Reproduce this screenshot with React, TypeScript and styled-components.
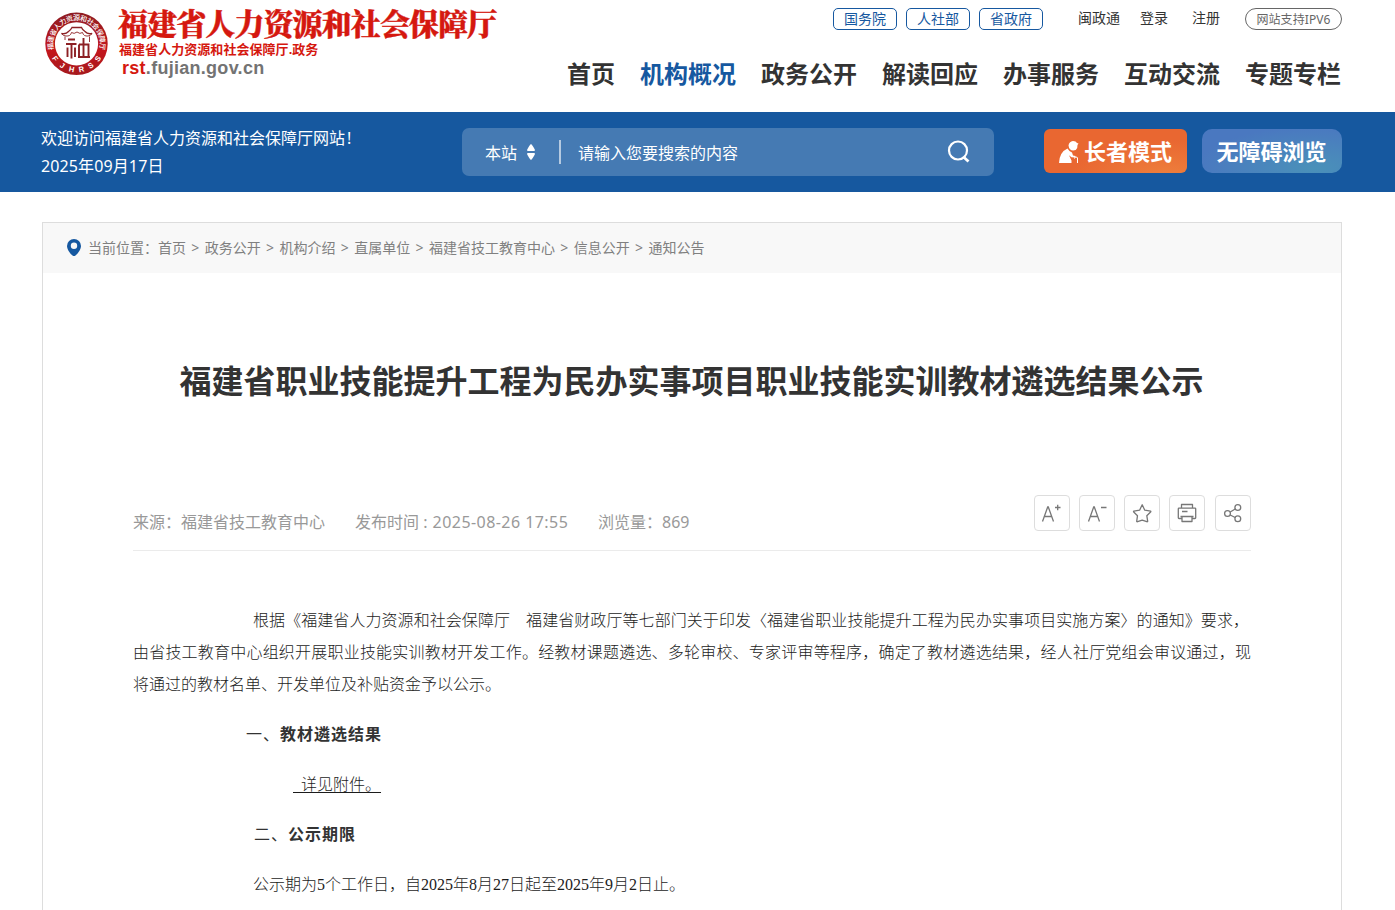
import React from "react";
import styled, { createGlobalStyle } from "styled-components";

const GlobalStyle = createGlobalStyle`
  * { box-sizing: border-box; }
  html, body { margin: 0; padding: 0; }
  body {
    height: 910px;
    overflow: hidden;
    background: #fff;
    color: #333;
    font-family: "Noto Sans", "Noto Sans CJK SC", sans-serif;
    text-spacing-trim: space-all;
  }
  a { color: inherit; text-decoration: none; }
`;

const Header = styled.header`
  display: flex;
  justify-content: space-between;
  height: 112px;
  padding: 8px 53px 0 42px;
`;

const Brand = styled.div`
  display: flex;
  gap: 9px;
  padding-left: 2px;
`;

const Seal = styled.svg`
  width: 65px;
  height: 65px;
  margin-top: 3px;
`;

const BrandText = styled.div`
  display: flex;
  flex-direction: column;
  white-space: nowrap;
  color: #d5180f;
  font-family: "Liberation Sans", "Noto Sans CJK SC", sans-serif;
  font-weight: 700;
`;

const BrandTitle = styled.div`
  height: 33px;
  font-family: "Noto Serif CJK SC", "Noto Sans CJK SC", sans-serif;
  font-size: 30px;
  font-weight: 900;
  line-height: 29px;
  letter-spacing: -0.9px;
  -webkit-text-stroke: 0.4px #d5180f;
`;

const BrandSub = styled.div`
  padding-left: 1px;
  font-size: 13px;
  line-height: 17px;
  letter-spacing: 0.05px;
`;

const BrandUrl = styled.div`
  padding-left: 4px;
  font-size: 18px;
  line-height: 20px;
  letter-spacing: 0.28px;
  color: #737373;
  span { color: #d5180f; }
`;

const HeaderSide = styled.div`
  display: flex;
  flex-direction: column;
  align-items: flex-end;
`;

const TopLinks = styled.div`
  display: flex;
  align-items: center;
  height: 22px;
  font-size: 14px;
  line-height: 20px;
`;

const BoxLink = styled.a`
  width: 64px;
  height: 22px;
  margin-right: 9px;
  border: 1px solid #1658a0;
  border-radius: 5px;
  color: #1658a0;
  text-align: center;
`;

const UserLinks = styled.div`
  display: flex;
  margin: 0 25px 2px 26px;
`;

const PlainLink = styled.a<{ $gap?: number }>`
  margin-right: ${(p) => p.$gap ?? 0}px;
`;

const Ipv6 = styled.a`
  width: 97px;
  height: 22px;
  border: 1px solid #666;
  border-radius: 11px;
  color: #666;
  font-size: 12px;
  line-height: 21px;
  letter-spacing: 0.1px;
  text-align: center;
`;

const Nav = styled.nav`
  display: flex;
  gap: 25px;
  margin: 26px 1px 0 0;
  font-size: 24px;
  font-weight: 700;
  line-height: 36px;
  white-space: nowrap;
`;

const NavItem = styled.a<{ $active?: boolean }>`
  color: ${(p) => (p.$active ? "#1658a0" : "#333")};
`;

const Banner = styled.section`
  display: flex;
  align-items: flex-start;
  height: 80px;
  padding: 0 53px 0 41px;
  background: #16589f;
  color: #fff;
`;

const Welcome = styled.div`
  width: 421px;
  padding-top: 12px;
  font-size: 16px;
  line-height: 28px;
  white-space: nowrap;
`;

const WelcomeMark = styled.span`
  margin-left: 2px;
`;

const DateText = styled.div`
  letter-spacing: 0.12px;
`;

const SearchBox = styled.div`
  display: flex;
  align-items: center;
  width: 532px;
  height: 48px;
  margin-top: 16px;
  padding: 0 23px;
  border-radius: 7px;
  background: #457ab3;
  font-size: 16px;
`;

const SortArrows = styled.svg`
  width: 10px;
  height: 18px;
  margin-left: 9px;
`;

const Separator = styled.i`
  width: 2px;
  height: 24px;
  margin: 0 17px 0 23px;
  background: #b5cae1;
`;

const Placeholder = styled.span`
  flex: 1;
`;

const SearchIcon = styled.svg`
  width: 24px;
  height: 24px;
`;

const ModeButton = styled.button<{ $kind: "elder" | "access" }>`
  display: flex;
  align-items: center;
  justify-content: center;
  width: ${(p) => (p.$kind === "elder" ? 143 : 140)}px;
  height: 44px;
  margin: 17px 0 0 ${(p) => (p.$kind === "elder" ? 50 : 15)}px;
  padding: 0 1px 2px 0;
  border: 0;
  border-radius: ${(p) => (p.$kind === "elder" ? 6 : 10)}px;
  background: ${(p) =>
    p.$kind === "elder"
      ? "radial-gradient(ellipse at 85% 110%, #ee803d 0%, #e96731 55%)"
      : "radial-gradient(ellipse at 80% 90%, #4a91b9 0%, #4a78c0 75%)"};
  color: #fff;
  font: 700 22px "Noto Sans", "Noto Sans CJK SC", sans-serif;
  white-space: nowrap;
`;

const ElderIcon = styled.svg`
  width: 20px;
  height: 22px;
  margin: 4px 5px 0 1px;
`;

const Panel = styled.main`
  width: 1300px;
  height: 700px;
  margin: 30px 0 0 42px;
  border: 1px solid #ddd;
`;

const Crumbs = styled.div`
  display: flex;
  align-items: center;
  height: 50px;
  padding: 0 0 2px 24px;
  background: #f8f8f8;
  color: #808080;
  font-size: 14px;
  white-space: nowrap;
`;

const Pin = styled.svg`
  width: 14px;
  height: 17px;
  margin: 1px 7px 0 0;
`;

const CrumbSep = styled.span`
  width: 18.75px;
  text-align: center;
  font-size: 14px;
`;

const Article = styled.article`
  width: 1118px;
  margin-left: 90px;
`;

const Title = styled.h1`
  margin: 84px 0 0 -1px;
  font-size: 32px;
  font-weight: 700;
  line-height: 48px;
  text-align: center;
  white-space: nowrap;
`;

const Meta = styled.div`
  display: flex;
  height: 56px;
  margin-top: 90px;
  border-bottom: 1px solid #ebebeb;
  color: #999;
  font-size: 16px;
  white-space: nowrap;
`;

const MetaItem = styled.span<{ $width?: number }>`
  width: ${(p) => (p.$width ? `${p.$width}px` : "auto")};
  padding-top: 15px;
  line-height: 24px;
`;

const Stamp = styled.span`
  margin-left: 1px;
  letter-spacing: 0.44px;
`;

const Tools = styled.div`
  display: flex;
  gap: 9px;
  margin-left: auto;
`;

const Tool = styled.button`
  width: 36px;
  height: 36px;
  padding: 0;
  border: 1px solid #ddd;
  border-radius: 4px;
  background: #fff;
  &:last-child { margin-left: 1px; }
  svg {
    display: block;
    width: 34px;
    height: 34px;
    fill: none;
    stroke: #777;
    stroke-width: 1.3;
  }
`;

const Body = styled.div`
  padding-top: 54px;
  color: #1c1c1c;
  font-family: "Liberation Serif", "Noto Sans CJK SC", serif;
  font-size: 16px;
  font-weight: 300;
  line-height: 32px;
`;

const Paragraph = styled.p<{ $indent?: number }>`
  margin: 0 0 18px;
  padding-left: ${(p) => p.$indent ?? 0}px;
  white-space: nowrap;
`;

const Line = styled.span<{ $indent?: number; $end?: number; $last?: boolean }>`
  display: block;
  margin: 0 ${(p) => p.$end ?? 0}px 0 ${(p) => p.$indent ?? 0}px;
  text-align-last: ${(p) => (p.$last ? "left" : "justify")};
`;

const Heading = styled.h2<{ $indent: number }>`
  margin: 0 0 18px;
  padding-left: ${(p) => p.$indent}px;
  color: #333;
  font-size: 16px;
  font-weight: 700;
  line-height: 32px;
  letter-spacing: 1px;
  span { font-weight: 400; }
`;

const Underlined = styled.u`
  white-space: pre;
  text-decoration-skip-ink: none;
  text-underline-offset: 2px;
  text-decoration-thickness: 1px;
`;

const navItems = ["首页", "机构概况", "政务公开", "解读回应", "办事服务", "互动交流", "专题专栏"];
const crumbs = ["首页", "政务公开", "机构介绍", "直属单位", "福建省技工教育中心", "信息公开", "通知公告"];

const sealTop = "福建省人力资源和社会保障厅".split("");
const sealBottom = "FJHRSS".split("");

function SealLogo() {
  return (
    <Seal viewBox="0 0 65 65">
      <defs>
        <linearGradient id="sealRed" x1="0" y1="0" x2="0" y2="1">
          <stop offset="0" stopColor="#8d1c22" />
          <stop offset="0.6" stopColor="#c4161c" />
          <stop offset="1" stopColor="#a5191d" />
        </linearGradient>
      </defs>
      <circle cx="32.5" cy="32.8" r="31.2" fill="url(#sealRed)" />
      <circle cx="32.5" cy="32.8" r="21.6" fill="#fff" />
      <g fill="#fff" fontFamily="Noto Sans CJK SC" fontSize="7" fontWeight="500" textAnchor="middle">
        {sealTop.map((c, i) => (
          <text key={i} x="32.5" y="9.4" transform={`rotate(${-96 + i * 16} 32.5 32.8)`}>{c}</text>
        ))}
      </g>
      <g fill="#fff" fontFamily="Liberation Sans" fontSize="7.5" fontWeight="700" textAnchor="middle">
        {sealBottom.map((c, i) => (
          <text key={i} x="32.5" y="61.3" transform={`rotate(${55 - i * 22} 32.5 32.8)`}>{c}</text>
        ))}
      </g>
      <g fill="none" stroke="#8d2024">
        <path d="M17.500 22.500Q22 23.500 24.500 20.500 27 18.500 28 16.500H37.500Q38.500 19 41 20.500 43.500 23.500 48 22.500" strokeWidth="1.300" />
        <path d="M17.500 22.500Q19 25 22 25M48 22.500Q46.500 25 44 25M22 25Q26.500 25.500 27.500 21.500 30 23.500 33 21 36 23.500 38.500 21.500 39.500 25.500 44 25M21 25.500V29M45.500 25.500V31" strokeWidth=".9" />
        <path d="M24 28.500H31M22 33H32.500M27.500 33V47.500M23.500 36.500V46M31 36.500V46M39.500 27V46M35 33.500H44.500V46M35 33.500V46M34 46H46" strokeWidth="1.900" />
      </g>
    </Seal>
  );
}

export default function App() {
  return (
    <>
      <GlobalStyle />
      <Header>
        <Brand>
          <SealLogo />
          <BrandText>
            <BrandTitle>福建省人力资源和社会保障厅</BrandTitle>
            <BrandSub>福建省人力资源和社会保障厅.政务</BrandSub>
            <BrandUrl><span>rst</span>.fujian.gov.cn</BrandUrl>
          </BrandText>
        </Brand>
        <HeaderSide>
          <TopLinks>
            <BoxLink>国务院</BoxLink>
            <BoxLink>人社部</BoxLink>
            <BoxLink>省政府</BoxLink>
            <UserLinks>
              <PlainLink $gap={20}>闽政通</PlainLink>
              <PlainLink $gap={24}>登录</PlainLink>
              <PlainLink>注册</PlainLink>
            </UserLinks>
            <Ipv6>网站支持IPV6</Ipv6>
          </TopLinks>
          <Nav>
            {navItems.map((n) => (
              <NavItem key={n} $active={n === "机构概况"}>{n}</NavItem>
            ))}
          </Nav>
        </HeaderSide>
      </Header>

      <Banner>
        <Welcome>
          <div>欢迎访问福建省人力资源和社会保障厅网站<WelcomeMark>!</WelcomeMark></div>
          <DateText>2025年09月17日</DateText>
        </Welcome>
        <SearchBox>
          <span>本站</span>
          <SortArrows viewBox="0 0 10 18" fill="#fff">
            <path d="M5 1Q6.500 2 9 7q0 1-1 1H2Q1 8 1 7 3.500 2 5 1ZM5 17q1.500-1 4-6 0-1-1-1H2q-1 0-1 1 2.500 5 4 6Z" />
          </SortArrows>
          <Separator />
          <Placeholder>请输入您要搜索的内容</Placeholder>
          <SearchIcon viewBox="0 0 24 24" fill="none" stroke="#fff" strokeWidth="2.200">
            <circle cx="11" cy="10.500" r="9" />
            <path d="m16.500 17 5 4.500" strokeWidth="2.800" />
          </SearchIcon>
        </SearchBox>
        <ModeButton $kind="elder">
          <ElderIcon viewBox="0 0 20 22" fill="#fff">
            <path d="M9.500 4.500Q10 .5 14 0q3 0 4 2l1.500.5-1 1.500-.3 3q-1 2.500-4 2.500-4 0-4.700-5Z" />
            <path d="M0 22Q.5 11 8.500 7.500q2 3.500 4.500 4l1 3 2.500.5v1.500l-4-.3-2.500-2 2.500 5.300V22Z" />
            <path d="M15.500 17.500v-.8q1.500-1.500 3 0V22" fill="none" stroke="#fff" />
          </ElderIcon>
          长者模式
        </ModeButton>
        <ModeButton $kind="access">无障碍浏览</ModeButton>
      </Banner>

      <Panel>
        <Crumbs>
          <Pin viewBox="0 0 14 17">
            <path fillRule="evenodd" fill="#1658a0" d="M7 0a7 7 0 0 1 7 7c0 3.500-3.500 8-5.500 9.500q-1.500 1-3 0C3.500 15 0 10.500 0 7a7 7 0 0 1 7-7Zm0 3.500a3.200 3.200 0 1 0 0 6.400 3.200 3.200 0 0 0 0-6.400Z" />
          </Pin>
          <span>当前位置：</span>
          {crumbs.map((c, i) => (
            <React.Fragment key={c}>
              {i > 0 && <CrumbSep>&gt;</CrumbSep>}
              <a>{c}</a>
            </React.Fragment>
          ))}
        </Crumbs>
        <Article>
          <Title>福建省职业技能提升工程为民办实事项目职业技能实训教材遴选结果公示</Title>
          <Meta>
            <MetaItem $width={222}>来源：福建省技工教育中心</MetaItem>
            <MetaItem $width={243}>发布时间 : <Stamp>2025-08-26 17:55</Stamp></MetaItem>
            <MetaItem>浏览量：869</MetaItem>
            <Tools>
              <Tool aria-label="放大字体"><svg viewBox="0 0 34 34"><path d="m7.500 25.500 5.200-14.500h.6l5.200 14.500M9.200 20.500h7.600M20 11.500h5.500M22.700 8.700v5.500" /></svg></Tool>
              <Tool aria-label="缩小字体"><svg viewBox="0 0 34 34"><path d="m8.500 25.500 5.200-14.500h.6l5.200 14.500M10.200 20.500h7.600M21 11.500h5.500" /></svg></Tool>
              <Tool aria-label="收藏"><svg viewBox="0 0 34 34"><path strokeLinejoin="round" d="m17.200 8.800 2.600 5.400 5.800.9q.5.300 0 .9l-3.800 3.700.9 5.600q-.2.700-.9.400l-4.600-1.600-4.600 1.600q-.8.200-.9-.4l.8-5.600-3.800-3.700q-.4-.6.200-.9l5.700-.9Z" /></svg></Tool>
              <Tool aria-label="打印"><svg viewBox="0 0 34 34"><path strokeLinejoin="round" d="M11.500 12v-3.500h11V12M11.500 22.500h-2.500q-.7 0-.7-.7v-9q0-.7.7-.7h16q.7 0 .7.700v9q0 .7-.7.700h-2.500M12 15.500h5.500M10.500 20.500h13M12 20.500v5h10v-5" /></svg></Tool>
              <Tool aria-label="分享"><svg viewBox="0 0 34 34"><circle cx="11.500" cy="17.500" r="2.900" /><circle cx="21.800" cy="11.500" r="2.900" /><circle cx="21.800" cy="22.800" r="2.900" /><path d="m14.200 16 5-3M14.200 19l5 2.500" /></svg></Tool>
            </Tools>
          </Meta>
          <Body>
            <Paragraph>
              <Line $indent={120} $end={2}>根据《福建省人力资源和社会保障厅　福建省财政厅等七部门关于印发〈福建省职业技能提升工程为民办实事项目实施方案〉的通知》要求，</Line>
              <Line>由省技工教育中心组织开展职业技能实训教材开发工作。经教材课题遴选、多轮审校、专家评审等程序，确定了教材遴选结果，经人社厅党组会审议通过，现</Line>
              <Line $last>将通过的教材名单、开发单位及补贴资金予以公示。</Line>
            </Paragraph>
            <Heading $indent={113}><span>一、</span>教材遴选结果</Heading>
            <Paragraph $indent={160}><Underlined>{"\u2002详见附件。"}</Underlined></Paragraph>
            <Heading $indent={121}><span>二、</span>公示期限</Heading>
            <Paragraph $indent={120}>公示期为5个工作日，自2025年8月27日起至2025年9月2日止。</Paragraph>
          </Body>
        </Article>
      </Panel>
    </>
  );
}
